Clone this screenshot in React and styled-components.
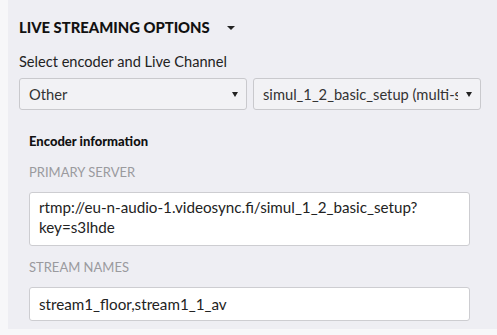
import React from "react";
import styled, { createGlobalStyle } from "styled-components";

const Global = createGlobalStyle`
  html, body { margin: 0; padding: 0; background: #f7f7f9; }
  body { font-family: Lato, "Open Sans", sans-serif; color: #222; }
  * { box-sizing: border-box; }
`;

const Page = styled.div`
  padding: 0 0 5px 8px;
`;

const Panel = styled.section`
  background: #eeeef3;
  padding: 17px 16px 8px 11px;
`;

const TitleRow = styled.div`
  display: flex;
  align-items: center;
  gap: 17px;
  height: 20px;
`;

const Title = styled.h2`
  margin: 0;
  font-size: 14.8px;
  line-height: 20px;
  font-weight: 900;
  color: #111;
`;

const Triangle = styled.span`
  flex-shrink: 0;
  width: 0;
  height: 0;
  margin-top: ${(p) => p.$offset || 0}px;
  border-left: ${(p) => p.$w / 2}px solid transparent;
  border-right: ${(p) => p.$w / 2}px solid transparent;
  border-top: ${(p) => p.$h}px solid #222;
`;

const FieldLabel = styled.div`
  margin-top: 15px;
  font-size: 14.6px;
  line-height: 20px;
  color: #222;
`;

const SelectRow = styled.div`
  display: grid;
  grid-template-columns: minmax(0, 1fr) minmax(0, 1fr);
  gap: 6px;
  margin-top: 6px;
`;

const Select = styled.div`
  height: 32px;
  border: 1px solid #c9c9cd;
  border-radius: 3px;
  background: #f2f2f5;
  display: flex;
  align-items: center;
  gap: 8px;
  padding: 0 8px 0 9px;
  font-size: 14.7px;
  color: #333;
`;

const SelectText = styled.span`
  flex: 1;
  min-width: 0;
  white-space: nowrap;
  overflow: hidden;
`;

const Section = styled.div`
  padding: 0 11px 0 10px;
`;

const SectionHeading = styled.h3`
  margin: 23px 0 0;
  font-size: 13px;
  line-height: 16px;
  font-weight: 900;
  color: #111;
`;

const SmallLabel = styled.div`
  margin-top: ${(p) => p.$top}px;
  font-size: 13px;
  line-height: 16px;
  color: #9a9a9e;
  text-transform: uppercase;
`;

const Input = styled.div`
  margin-top: 12px;
  background: #fff;
  border: 1px solid #cdcdd1;
  border-radius: 3px;
  padding: ${(p) => (p.$multi ? "4px 9px 8px" : "6px 9px")};
  font-size: 15.2px;
  line-height: 20px;
  color: #222;
  min-height: ${(p) => (p.$multi ? 54 : 34)}px;
  word-break: break-word;
`;

export default function App() {
  return (
    <>
      <Global />
      <Page>
        <Panel>
          <TitleRow>
            <Title>LIVE STREAMING OPTIONS</Title>
            <Triangle $w={8} $h={4} $offset={1} />
          </TitleRow>
          <FieldLabel>Select encoder and Live Channel</FieldLabel>
          <SelectRow>
            <Select>
              <SelectText>Other</SelectText>
              <Triangle $w={6} $h={5} />
            </Select>
            <Select>
              <SelectText>simul_1_2_basic_setup (multi-stream)</SelectText>
              <Triangle $w={6} $h={5} />
            </Select>
          </SelectRow>
          <Section>
            <SectionHeading>Encoder information</SectionHeading>
            <SmallLabel $top={15}>Primary server</SmallLabel>
            <Input $multi>
              rtmp://eu-n-audio-1.videosync.fi/simul_1_2_basic_setup?
              <br />
              key=s3lhde
            </Input>
            <SmallLabel $top={13}>Stream names</SmallLabel>
            <Input>stream1_floor,stream1_1_av</Input>
          </Section>
        </Panel>
      </Page>
    </>
  );
}
